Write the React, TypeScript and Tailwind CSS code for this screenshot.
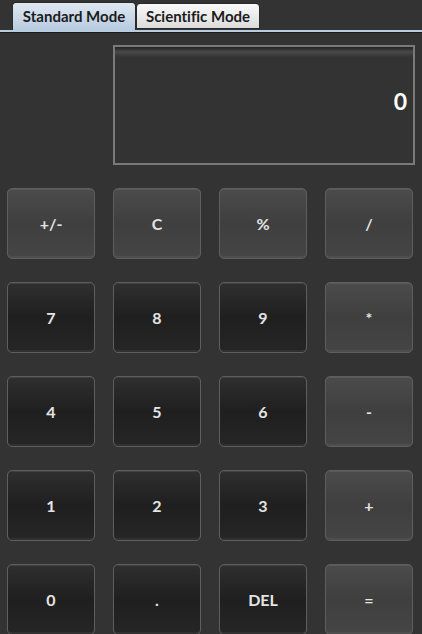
import React from 'react'

const font = { fontFamily: 'Lato, "Open Sans", sans-serif' }

type Key = { label: string; kind: 'op' | 'num' }

const keys: Key[] = [
  { label: '+/-', kind: 'op' },
  { label: 'C', kind: 'op' },
  { label: '%', kind: 'op' },
  { label: '/', kind: 'op' },
  { label: '7', kind: 'num' },
  { label: '8', kind: 'num' },
  { label: '9', kind: 'num' },
  { label: '*', kind: 'op' },
  { label: '4', kind: 'num' },
  { label: '5', kind: 'num' },
  { label: '6', kind: 'num' },
  { label: '-', kind: 'op' },
  { label: '1', kind: 'num' },
  { label: '2', kind: 'num' },
  { label: '3', kind: 'num' },
  { label: '+', kind: 'op' },
  { label: '0', kind: 'num' },
  { label: '.', kind: 'num' },
  { label: 'DEL', kind: 'num' },
  { label: '=', kind: 'op' },
]

const CalcKey = ({ k }: { k: Key }) => (
  <button
    className={
      'h-[71px] w-[88px] rounded-[5px] border border-[#5e5e5e] text-[16px] font-bold text-[#e4e4e4] shadow-[inset_0_1px_0_rgba(255,255,255,0.08),inset_0_-2px_0_rgba(255,255,255,0.05)] ' +
      (k.kind === 'op'
        ? 'bg-gradient-to-b from-[#4b4b4b] via-[#3f3f3f] to-[#454545]'
        : 'bg-gradient-to-b from-[#2f2f2f] via-[#1f1f1f] to-[#262626]')
    }
  >
    {k.label}
  </button>
)

export default function App() {
  return (
    <div className="h-[634px] w-[422px] overflow-hidden bg-[#333333] [font-variant-ligatures:none]" style={font}>
      {/* Tab header */}
      <div className="relative h-[34px] bg-[#333333]">
        <div className="flex h-[30px] items-end pl-[12px]">
          <div className="z-10 flex h-[28px] w-[124px] items-center justify-center rounded-t-[4px] border border-b-0 border-[#2a2a2a] bg-gradient-to-b from-[#dfe8f1] to-[#b7cbe0] text-[15px] font-bold text-[#1b1b1b]">
            Standard Mode
          </div>
          <div className="mb-[1px] flex h-[26px] w-[124px] items-center justify-center rounded-t-[4px] border border-[#2a2a2a] bg-gradient-to-b from-[#fafafa] to-[#dcdcdc] text-[15px] font-bold text-[#1b1b1b]">
            Scientific Mode
          </div>
        </div>
        <div className="h-[3px] border-b border-[#1a1a1a] bg-[#b9cde1]" />
      </div>

      {/* Body */}
      <div className="pl-[7px] pt-[11px]">
        <div className="grid grid-cols-[88px_88px_88px_88px] gap-x-[18px] gap-y-[23px]">
          <div className="col-span-3 col-start-2 flex h-[120px] w-[302px] flex-col border-2 border-[#7a7a7a] bg-[#333333]">
            <div className="h-[10px] bg-gradient-to-b from-[#222222] via-[#4a4a4a] to-[#333333]" />
            <div className="flex flex-1 items-center justify-end pb-[18px] pr-[6px] text-[23px] font-bold text-white">
              0
            </div>
          </div>
          {keys.map((k) => (
            <CalcKey key={k.label} k={k} />
          ))}
        </div>
      </div>
    </div>
  )
}
